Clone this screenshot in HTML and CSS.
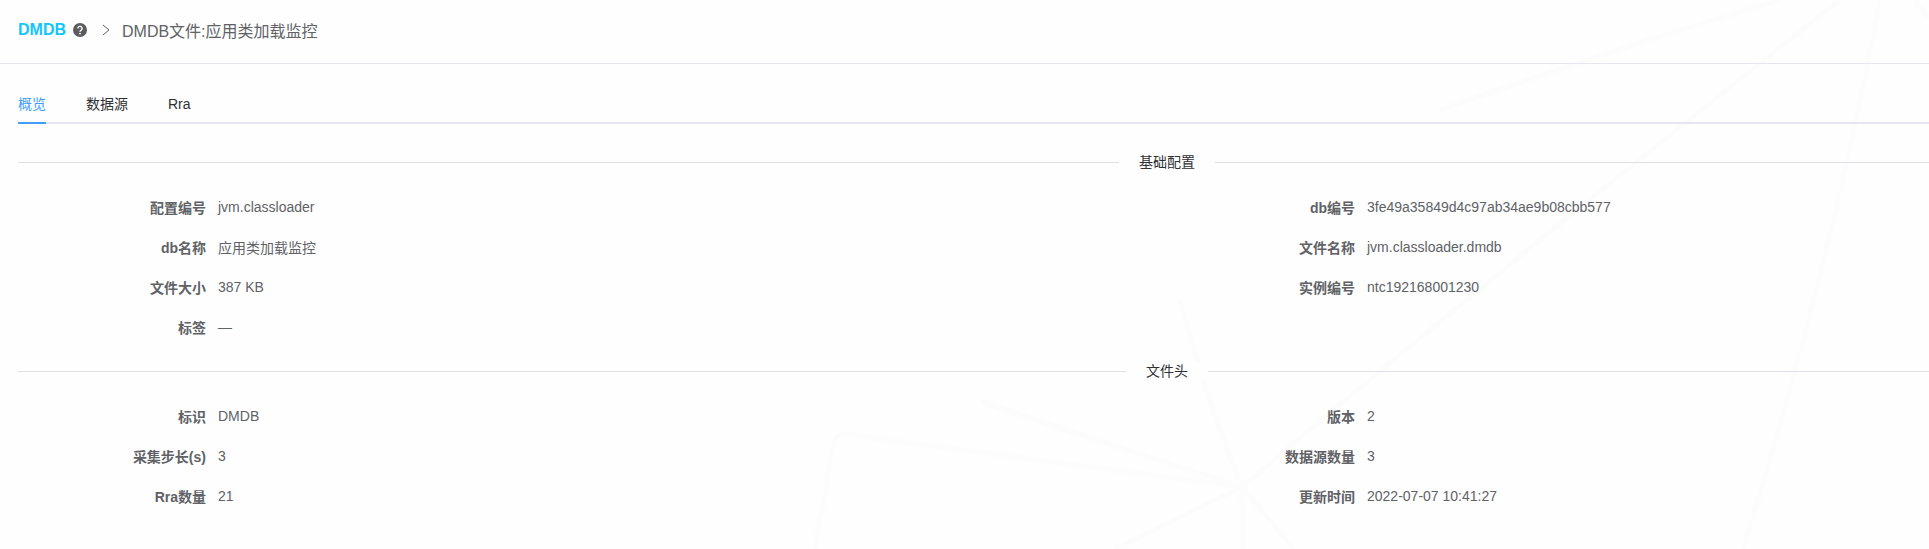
FILE: index.html
```html
<!DOCTYPE html>
<html>
<head>
    <title>DMDB</title>
    <link rel="stylesheet" href="styles.css">
</head>
<body>
    <svg class="backdrop" viewBox="0 0 1929 549" aria-hidden="true">
        <path d="M1780 0 Q1610 50 1440 110"/>
        <path d="M1840 0 Q1510 260 1242 487"/>
        <path d="M1880 0 Q1830 270 1743 549"/>
        <path d="M1915 0 L1929 18"/>
        <path d="M1180 300 Q1210 410 1242 487"/>
        <path d="M981 402 L1242 487"/>
        <path d="M815 549 L833 445 Q836 431 850 435 L1242 487"/>
        <path d="M1242 487 L1115 549"/>
        <path d="M1242 487 L1243 549"/>
        <path d="M1242 487 L1294 549"/>
    </svg>

    <div class="header">
        <span class="brand">DMDB</span>
        <svg class="help-icon" viewBox="0 0 14 14">
            <circle cx="7" cy="7" r="7" fill="#5b5b60"/>
            <path d="M4.9 5.4a2.1 2.1 0 1 1 3.2 1.8c-.7.4-1.1.8-1.1 1.5" fill="none" stroke="#fff" stroke-width="1.4"/>
            <circle cx="7" cy="10.6" r=".9" fill="#fff"/>
        </svg>
        <svg class="chevron" viewBox="0 0 8 12">
            <path d="M1 1l6 5-6 5" fill="none" stroke="#606266" stroke-width="1"/>
        </svg>
        <span class="page-title">DMDB文件:应用类加载监控</span>
    </div>

    <div class="tabs">
        <div class="tab active">概览</div>
        <div class="tab">数据源</div>
        <div class="tab">Rra</div>
    </div>

    <div class="divider"><span>基础配置</span></div>
    <div class="fields">
        <div class="field"><label>配置编号</label><span>jvm.classloader</span></div>
        <div class="field"><label>db编号</label><span>3fe49a35849d4c97ab34ae9b08cbb577</span></div>
        <div class="field"><label>db名称</label><span>应用类加载监控</span></div>
        <div class="field"><label>文件名称</label><span>jvm.classloader.dmdb</span></div>
        <div class="field"><label>文件大小</label><span>387 KB</span></div>
        <div class="field"><label>实例编号</label><span>ntc192168001230</span></div>
        <div class="field"><label>标签</label><span>—</span></div>
    </div>

    <div class="divider"><span>文件头</span></div>
    <div class="fields">
        <div class="field"><label>标识</label><span>DMDB</span></div>
        <div class="field"><label>版本</label><span>2</span></div>
        <div class="field"><label>采集步长(s)</label><span>3</span></div>
        <div class="field"><label>数据源数量</label><span>3</span></div>
        <div class="field"><label>Rra数量</label><span>21</span></div>
        <div class="field"><label>更新时间</label><span>2022-07-07 10:41:27</span></div>
    </div>
</body>
</html>
```

FILE: styles.css
```css
/* Page font and background */
body {
    margin: 0;
    position: relative;
    overflow: hidden;
    height: 549px;
    font-family: "Liberation Sans", "Noto Sans CJK SC", sans-serif;
    font-size: 14px;
    color: #606266;
    background-color: #fefefe;
}

/* Faint line art behind the page */
.backdrop {
    position: absolute;
    top: 0;
    left: 0;
    width: 1929px;
    height: 549px;
    z-index: -1;
}

    .backdrop path {
        fill: none;
        stroke: #fcfcfd;
        stroke-width: 5;
    }

/* Top breadcrumb bar */
.header {
    display: flex;
    align-items: center;
    height: 60px;
    padding: 0 0 3px 18px;
    border-bottom: 1px solid #e6e6ee;
}

.brand {
    font-size: 16px;
    font-weight: bold;
    color: #11c5ff;
}

.help-icon {
    width: 14px;
    height: 14px;
    margin-left: 7px;
}

.chevron {
    width: 8px;
    height: 12px;
    margin-left: 15px;
}

.page-title {
    margin-left: 12px;
    font-size: 16px;
}

/* Tabs */
.tabs {
    display: flex;
    align-items: flex-start;
    gap: 40px;
    box-sizing: border-box;
    height: 40px;
    margin: 20px 0 0 18px;
    border-bottom: 2px solid #e6e6ee;
    color: #303133;
}

.tab {
    box-sizing: border-box;
    height: 40px;
    line-height: 40px;
}

    .tab.active {
        color: #409eff;
        border-bottom: 2px solid #409eff;
    }

/* Section dividers */
.divider {
    position: relative;
    height: 1px;
    margin: 38px 0 0 18px;
    background-color: #dfdfe6;
}

    .divider span {
        position: absolute;
        top: -9px;
        left: 1149px;
        transform: translateX(-50%);
        padding: 0 20px;
        line-height: 18px;
        color: #303133;
        background-color: #fefefe;
        white-space: nowrap;
    }

    .divider + .fields {
        margin-top: 25px;
    }

.fields + .divider {
    margin-top: 23px;
}

/* Label and value rows */
.fields {
    display: grid;
    grid-template-columns: 1149px 1fr;
    grid-auto-rows: 40px;
    padding-left: 18px;
}

.field {
    display: flex;
    align-items: center;
    gap: 12px;
    box-sizing: border-box;
    padding-bottom: 2px;
}

    .field label {
        width: 188px;
        font-weight: bold;
        text-align: right;
    }
```
